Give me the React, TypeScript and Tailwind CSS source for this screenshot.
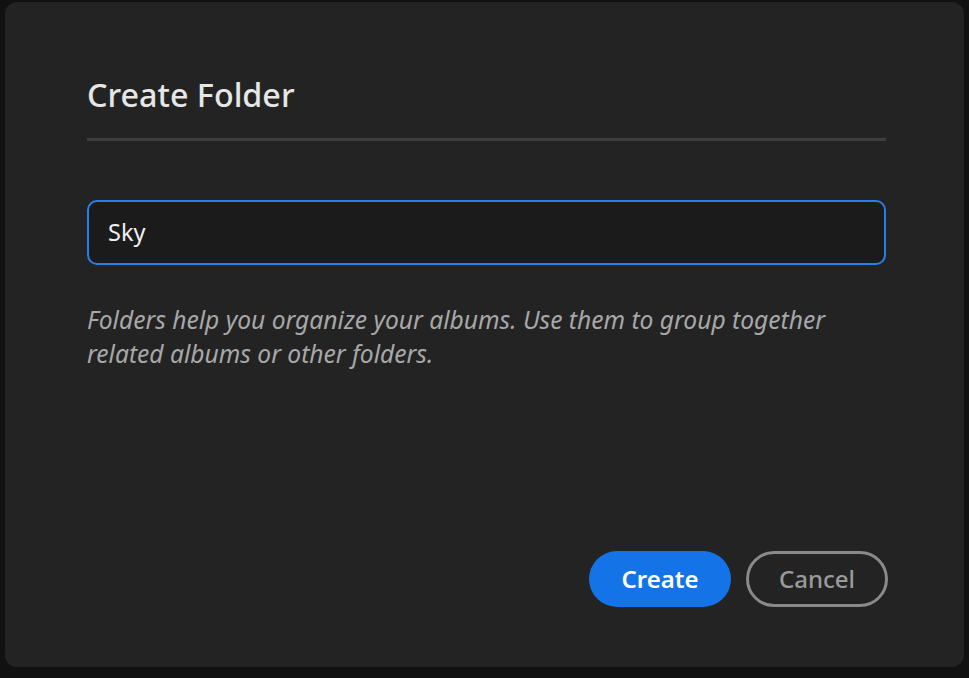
export default function App() {
  return (
    <div
      className="flex h-[678px] w-[969px] bg-[#111111] px-[5px] pt-[2px] pb-[11px]"
      style={{ fontFamily: '"Noto Sans", "Open Sans", sans-serif' }}
    >
      <div className="flex flex-1 flex-col rounded-[12px] bg-[#232323] pl-[82px] pr-[78px] pt-[70px]">
        <h1 className="text-[32.3px] font-medium leading-[44px] text-[#e6e6e6]">Create Folder</h1>
        <div className="mt-[22px] h-[3px] bg-[#3e3e3e]" />

        <div className="mt-[59px] flex h-[65px] items-center rounded-[10px] border-2 border-[#2680eb] bg-[#1b1b1b] px-[19px]">
          <span className="text-[23.5px] text-[#f0f0f0]">Sky</span>
        </div>

        <p className="mt-[38px] text-[24.6px] italic leading-[34px] text-[#a8a8a8]">
          Folders help you organize your albums. Use them to group together
          <br />
          related albums or other folders.
        </p>

        <div className="mt-auto mb-[60px] -mr-[2px] flex justify-end gap-[15px]">
          <button className="h-[56px] w-[142px] rounded-full bg-[#1473e6] text-[24px] font-semibold text-white">
            Create
          </button>
          <button className="h-[56px] w-[142px] rounded-full border-[3px] border-[#8a8a8a] text-[24px] font-medium text-[#9a9a9a]">
            Cancel
          </button>
        </div>
      </div>
    </div>
  );
}
